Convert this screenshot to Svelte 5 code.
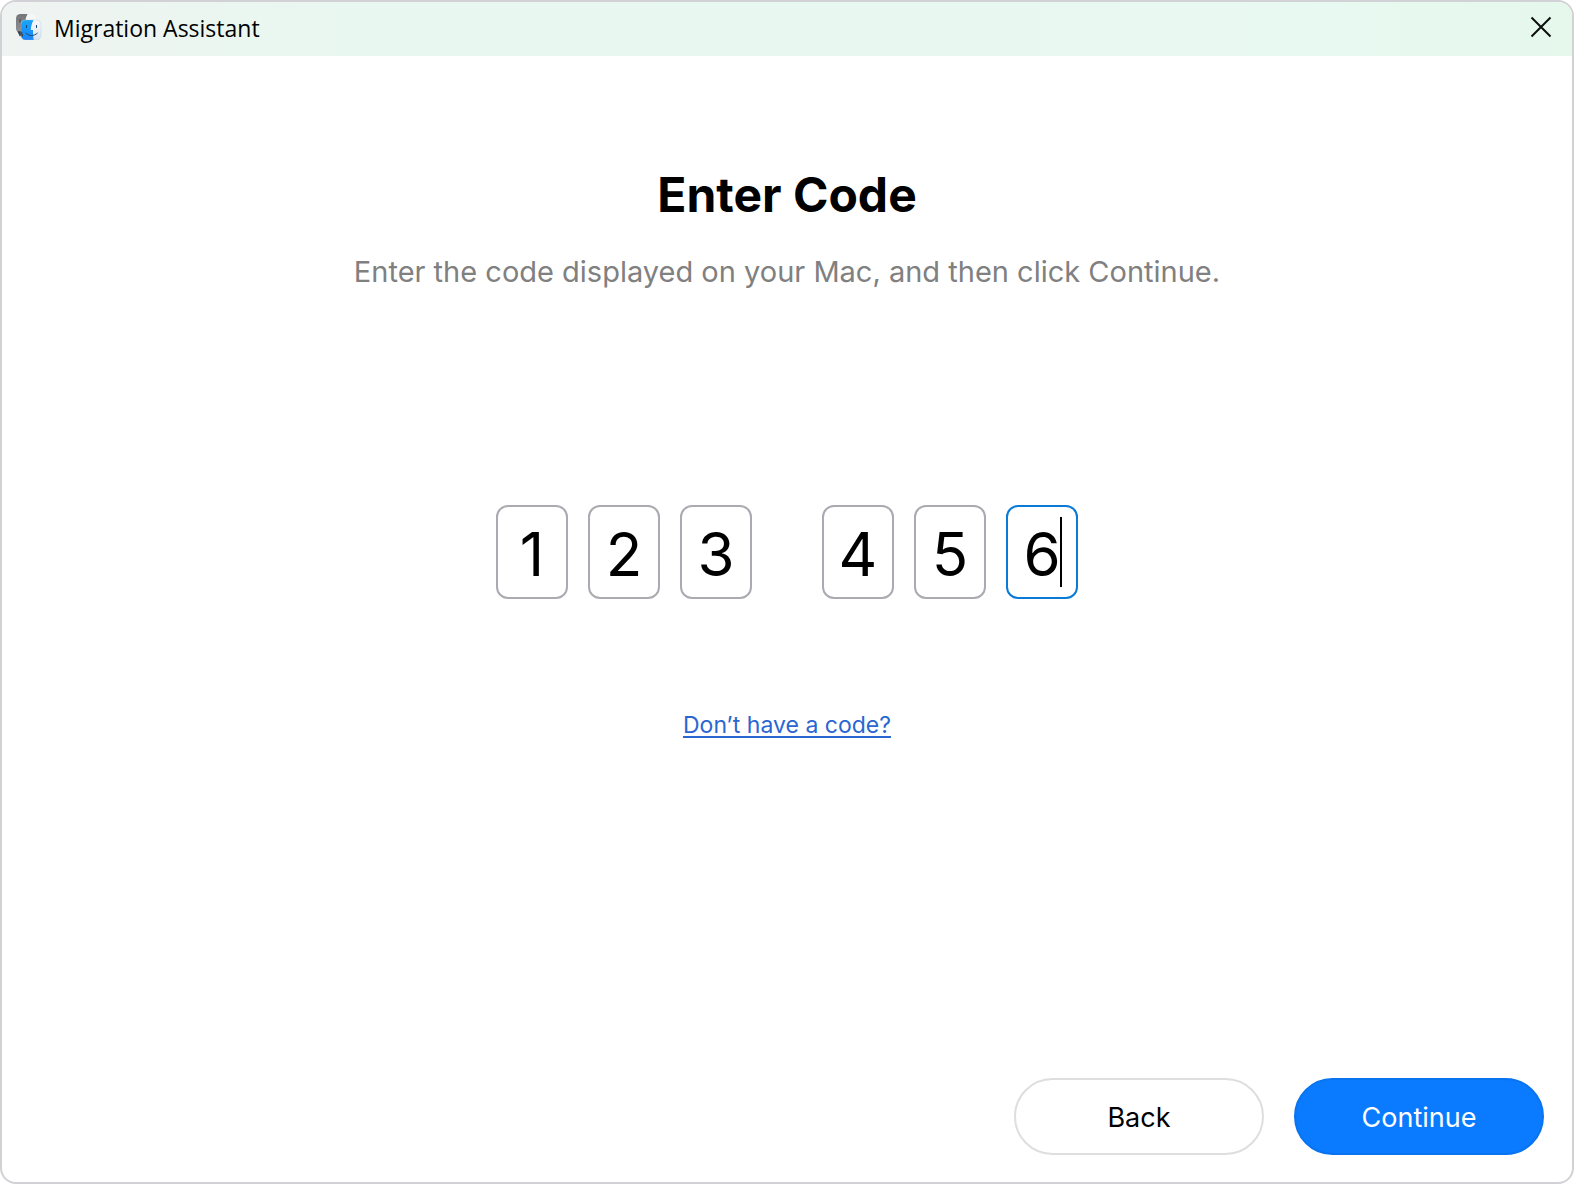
<script>
	let groups = [
		["1", "2", "3"],
		["4", "5", "6"]
	]
	let active = 5

	function next(e, n) {
		if (!e.target.value) return
		active = Math.min(n + 1, 5)
		document.getElementById("digit" + active).focus()
	}
</script>

<main class="window">
	<header class="titlebar">
		<svg class="logo" viewBox="0 0 26 26" aria-hidden="true">
			<defs>
				<linearGradient id="gray" x1="0" y1="0" x2="0" y2="1">
					<stop offset="0" stop-color="#737577" />
					<stop offset="1" stop-color="#909396" />
				</linearGradient>
				<linearGradient id="blue" x1="0" y1="0" x2="0" y2="1">
					<stop offset="0" stop-color="#17a6fb" />
					<stop offset="1" stop-color="#1a84fa" />
				</linearGradient>
				<linearGradient id="white" x1="0" y1="0" x2="0" y2="1">
					<stop offset="0" stop-color="#f8fafc" />
					<stop offset="1" stop-color="#d8e4f0" />
				</linearGradient>
				<clipPath id="front"><rect x="5" y="6" width="20" height="20" rx="4.5" /></clipPath>
				<clipPath id="back"><rect x="0" y="0" width="20" height="19" rx="4.5" /></clipPath>
			</defs>
			<g clip-path="url(#back)">
				<rect width="20" height="19" fill="#f4f6f8" />
				<path d="M0 0H11.5C9.7 4 9 7 9 11H12V19H0Z" fill="url(#gray)" />
			</g>
			<path d="M4 5.5V8" stroke="#4a4d50" stroke-width="1.2" stroke-linecap="round" />
			<path d="M1.5 17.5L4 22.5L5 20.8C5.4 21.7 6 22.4 7 22.9V20C6.7 19.6 6.5 19 6.3 18.5L7.5 17.3Z" fill="#35414c" />
			<g clip-path="url(#front)">
				<rect x="5" y="6" width="20" height="20" fill="url(#white)" />
				<path d="M5 6H17.5C15.8 9.5 15 12.5 14.8 16H17C17 19.5 17.2 23 17.7 26H5Z" fill="url(#blue)" />
			</g>
			<path d="M2 17.5L4 22.5L5 20.8C5.4 21.7 6 22.4 7 22.9V20.5C6.5 20 6 19.3 5.9 18.8L6.8 18Z" fill="#35414c" />
			<rect x="5" y="6" width="20" height="20" rx="4.5" fill="none" stroke="#aebcc8" stroke-width="0.5" stroke-opacity="0.6" />
			<path d="M10.5 11.5V13.5M20.5 11.5V13.5" stroke="#164263" stroke-width="1" stroke-linecap="round" />
			<path d="M10 19.2C13 22.4 18 22.4 21.3 19.2" fill="none" stroke="#204a6a" stroke-width="1" stroke-linecap="round" />
		</svg>
		<span class="name">Migration Assistant</span>
		<button class="close" type="button" aria-label="Close">
			<svg viewBox="0 0 22 22" aria-hidden="true">
				<path d="M1.5 1.5L20.5 20.5M20.5 1.5L1.5 20.5" />
			</svg>
		</button>
	</header>

	<section class="content">
		<h1>Enter Code</h1>
		<p>Enter the code displayed on your Mac, and then click Continue.</p>

		<div class="code">
			{#each groups as group, g}
				<div class="group">
					{#each group as digit, i}
						{@const n = g * 3 + i}
						<div class="digit" class:active={active === n}>
							<input
								id="digit{n}"
								type="text"
								inputmode="numeric"
								maxlength="1"
								aria-label="Digit {n + 1}"
								bind:value={group[i]}
								on:focus={() => (active = n)}
								on:input={(e) => next(e, n)}
							/>
							{#if active === n}
								<span class="caret"></span>
							{/if}
						</div>
					{/each}
				</div>
			{/each}
		</div>

		<a href="#help">Don’t have a code?</a>
	</section>

	<footer>
		<button class="action" type="button">Back</button>
		<button class="action primary" type="button">Continue</button>
	</footer>
</main>

<style>
	:global(body) {
		margin: 0;
		background: #fff;
	}
	.window {
		box-sizing: border-box;
		min-height: 100vh;
		display: flex;
		flex-direction: column;
		border: 2px solid #d2d2d6;
		border-radius: 16px;
		overflow: hidden;
		background: #fff;
		color: #000;
		font-family: Inter, sans-serif;
	}
	.titlebar {
		box-sizing: border-box;
		display: flex;
		align-items: center;
		height: 54px;
		padding: 0 20px 4px 14px;
		background: linear-gradient(90deg, #eff3f1 0, #e8f8f0 24%, #e8f9f1 85%, #e6f8ec 100%);
	}
	.logo {
		width: 26px;
		height: 26px;
	}
	.name {
		margin-left: 12px;
		padding-top: 2px;
		font-family: "Open Sans", sans-serif;
		font-size: 23px;
		line-height: 32px;
	}
	.close {
		margin-left: auto;
		width: 22px;
		height: 22px;
		padding: 0;
		border: 0;
		background: none;
	}
	.close svg {
		display: block;
		width: 22px;
		height: 22px;
	}
	.close path {
		stroke: #0b0f0d;
		stroke-width: 2;
	}
	.content {
		flex: 1;
		display: flex;
		flex-direction: column;
		align-items: center;
		padding: 109px 24px 0;
	}
	h1 {
		margin: 0;
		font-size: 48px;
		line-height: 60px;
		font-weight: 700;
	}
	p {
		margin: 27px 0 0;
		font-size: 29px;
		line-height: 40px;
		color: #808080;
	}
	.code {
		display: flex;
		gap: 70px;
		margin-top: 213px;
	}
	.group {
		display: flex;
		gap: 20px;
	}
	.digit {
		position: relative;
		box-sizing: border-box;
		width: 72px;
		height: 94px;
		border: 2px solid #abaab1;
		border-radius: 12px;
	}
	.digit.active {
		border-color: #0a7ad8;
	}
	input {
		box-sizing: border-box;
		width: 100%;
		height: 100%;
		padding: 4px 0 0;
		border: 0;
		outline: 0;
		background: none;
		color: #000;
		font: 60px Inter, sans-serif;
		text-align: center;
		caret-color: transparent;
	}
	.caret {
		position: absolute;
		top: 10px;
		right: 14px;
		width: 2px;
		height: 70px;
		background: #000;
	}
	a {
		margin-top: 110px;
		font-size: 23px;
		line-height: 32px;
		color: #2a66d2;
		text-underline-offset: 3px;
		text-decoration-thickness: 2px;
	}
	footer {
		display: flex;
		justify-content: flex-end;
		gap: 30px;
		padding: 0 28px 27px;
	}
	.action {
		width: 250px;
		height: 77px;
		padding: 2px 0 0;
		border: 2px solid #dedede;
		border-radius: 39px;
		background: #fff;
		color: #000;
		font: 27px Inter, sans-serif;
	}
	.action.primary {
		border-color: #0a74f0;
		background: #0a7aff;
		color: #fff;
	}
</style>
